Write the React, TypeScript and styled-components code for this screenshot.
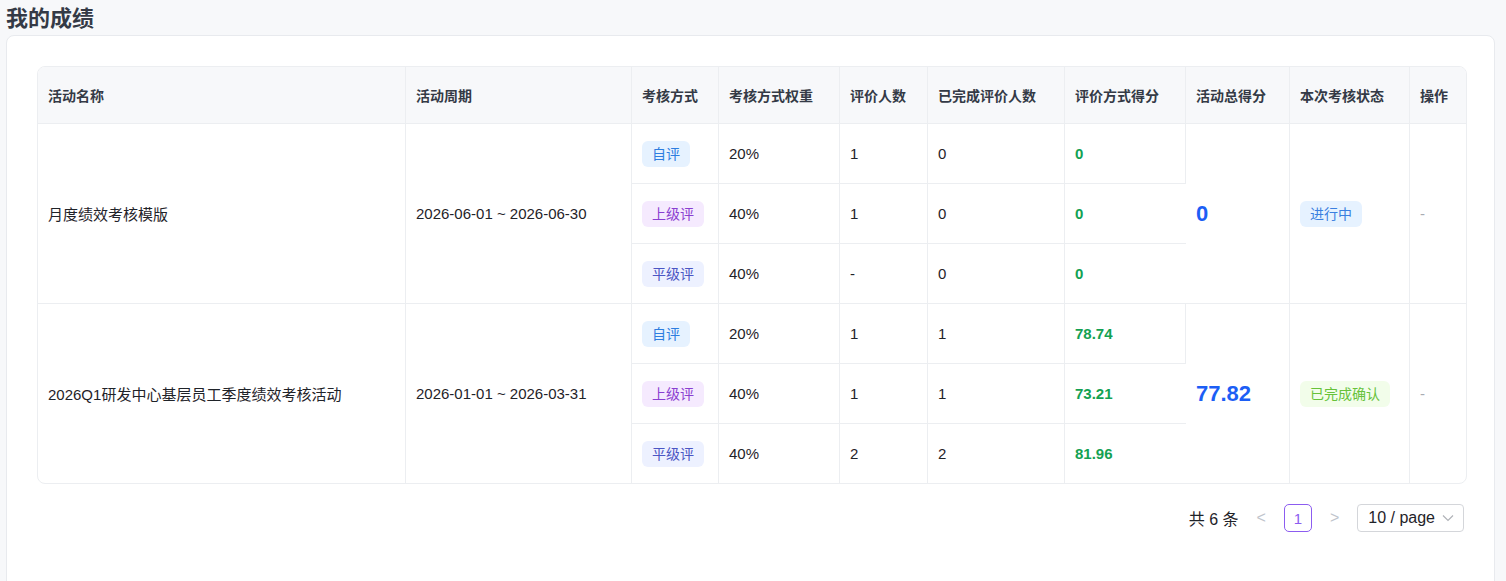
import { FunctionComponent } from 'react';
import styled, { createGlobalStyle } from 'styled-components';

const GlobalStyle = createGlobalStyle`
  body {
    margin: 0;
    background: #f7f8fa;
    font-family: "Liberation Sans", "Noto Sans CJK SC", sans-serif;
    color: #1f2329;
  }
`;

const Page = styled.div`
  padding: 0 11px 0 6px;
  height: 581px;
  overflow: hidden;
`;

const Title = styled.h1`
  margin: 0;
  height: 35px;
  line-height: 38px;
  font-size: 22px;
  font-weight: 700;
  color: #343a46;
`;

const Card = styled.div`
  background: #fff;
  border: 1px solid #e8eaee;
  border-radius: 8px;
  padding: 30px 30px 60px 30px;
`;

const Table = styled.table`
  width: 1428px;
  border-collapse: separate;
  border-spacing: 0;
  table-layout: fixed;
  border: 1px solid #eceef1;
  border-radius: 8px;
  overflow: hidden;
  font-size: 15px;

  th {
    background: #f7f8fa;
    height: 56px;
    text-align: left;
    padding: 0 10px;
    font-size: 14px;
    font-weight: 700;
    color: #343a46;
    border-right: 1px solid #eceef1;
    border-bottom: 1px solid #eceef1;
  }

  td {
    height: 59px;
    padding: 0 10px;
    border-right: 1px solid #eceef1;
    border-bottom: 1px solid #eceef1;
    color: #1f2329;
  }

  th:last-child,
  td:last-child {
    border-right: none;
  }

  tbody tr:last-child td,
  td.last {
    border-bottom: none;
  }
`;

const Tag = styled.span<{ $kind: 'self' | 'up' | 'peer' | 'run' | 'done' }>`
  display: inline-block;
  padding: 0 10px;
  height: 26px;
  line-height: 26px;
  border-radius: 6px;
  font-size: 14px;
  color: ${p =>
    ({ self: '#2d7de0', up: '#8a3fd1', peer: '#4b55c4', run: '#3a7fe0', done: '#67c23a' })[p.$kind]};
  background: ${p =>
    ({ self: '#e6f2ff', up: '#f5eafe', peer: '#edf1ff', run: '#e6f2ff', done: '#f2fdea' })[p.$kind]};
`;

const Score = styled.span`
  color: #13a152;
  font-weight: 700;
`;

const Total = styled.span`
  color: #1c5ef5;
  font-weight: 700;
  font-size: 22px;
`;

const Dash = styled.span`
  color: #a8abb2;
`;

const Pager = styled.div`
  display: flex;
  justify-content: flex-end;
  align-items: center;
  gap: 14px;
  margin-top: 20px;
  font-size: 16px;
  color: #1f2329;
`;

const Arrow = styled.span`
  color: #c0c4cc;
  font-size: 16px;
  padding: 0 4px;
`;

const PageNum = styled.span`
  width: 28px;
  height: 28px;
  border: 1px solid #8c5cf0;
  border-radius: 5px;
  display: flex;
  align-items: center;
  justify-content: center;
  color: #8c5cf0;
  font-size: 15px;
  box-sizing: border-box;
`;

const Select = styled.div`
  display: flex;
  align-items: center;
  gap: 6px;
  height: 28px;
  padding: 0 8px 0 10px;
  border: 1px solid #d4d6da;
  border-radius: 4px;
  box-sizing: border-box;
`;

type Method = { tag: 'self' | 'up' | 'peer'; name: string; weight: string; count: string; done: string; score: string };
type Activity = { name: string; period: string; total: string; status: 'run' | 'done'; statusText: string; methods: Method[] };

const data: Activity[] = [
  {
    name: '月度绩效考核模版',
    period: '2026-06-01 ~ 2026-06-30',
    total: '0',
    status: 'run',
    statusText: '进行中',
    methods: [
      { tag: 'self', name: '自评', weight: '20%', count: '1', done: '0', score: '0' },
      { tag: 'up', name: '上级评', weight: '40%', count: '1', done: '0', score: '0' },
      { tag: 'peer', name: '平级评', weight: '40%', count: '-', done: '0', score: '0' },
    ],
  },
  {
    name: '2026Q1研发中心基层员工季度绩效考核活动',
    period: '2026-01-01 ~ 2026-03-31',
    total: '77.82',
    status: 'done',
    statusText: '已完成确认',
    methods: [
      { tag: 'self', name: '自评', weight: '20%', count: '1', done: '1', score: '78.74' },
      { tag: 'up', name: '上级评', weight: '40%', count: '1', done: '1', score: '73.21' },
      { tag: 'peer', name: '平级评', weight: '40%', count: '2', done: '2', score: '81.96' },
    ],
  },
];

const widths = [368, 226, 87, 121, 88, 137, 121, 104, 120, 56];
const heads = ['活动名称', '活动周期', '考核方式', '考核方式权重', '评价人数', '已完成评价人数', '评价方式得分', '活动总得分', '本次考核状态', '操作'];

const App: FunctionComponent = () => (
  <Page>
    <GlobalStyle />
    <Title>我的成绩</Title>
    <Card>
      <Table>
        <colgroup>
          {widths.map((w, i) => (
            <col key={i} style={{ width: w }} />
          ))}
        </colgroup>
        <thead>
          <tr>
            {heads.map(h => (
              <th key={h}>{h}</th>
            ))}
          </tr>
        </thead>
        <tbody>
          {data.map((a, ai) =>
            a.methods.map((m, mi) => {
              const last = ai === data.length - 1;
              return (
                <tr key={`${ai}-${mi}`}>
                  {mi === 0 && (
                    <>
                      <td rowSpan={3} className={last ? 'last' : ''}>{a.name}</td>
                      <td rowSpan={3} className={last ? 'last' : ''}>{a.period}</td>
                    </>
                  )}
                  <td><Tag $kind={m.tag}>{m.name}</Tag></td>
                  <td>{m.weight}</td>
                  <td>{m.count}</td>
                  <td>{m.done}</td>
                  <td><Score>{m.score}</Score></td>
                  {mi === 0 && (
                    <>
                      <td rowSpan={3} className={last ? 'last' : ''}><Total>{a.total}</Total></td>
                      <td rowSpan={3} className={last ? 'last' : ''}><Tag $kind={a.status}>{a.statusText}</Tag></td>
                      <td rowSpan={3} className={last ? 'last' : ''}><Dash>-</Dash></td>
                    </>
                  )}
                </tr>
              );
            })
          )}
        </tbody>
      </Table>
      <Pager>
        <span>共 6 条</span>
        <Arrow>&lt;</Arrow>
        <PageNum>1</PageNum>
        <Arrow>&gt;</Arrow>
        <Select>
          10 / page
          <svg width="14" height="14" viewBox="0 0 14 14" fill="none" stroke="#b0b3b8" strokeWidth="1.2">
            <path d="M2 4.5l5 5 5-5" />
          </svg>
        </Select>
      </Pager>
    </Card>
  </Page>
);

export default App;
